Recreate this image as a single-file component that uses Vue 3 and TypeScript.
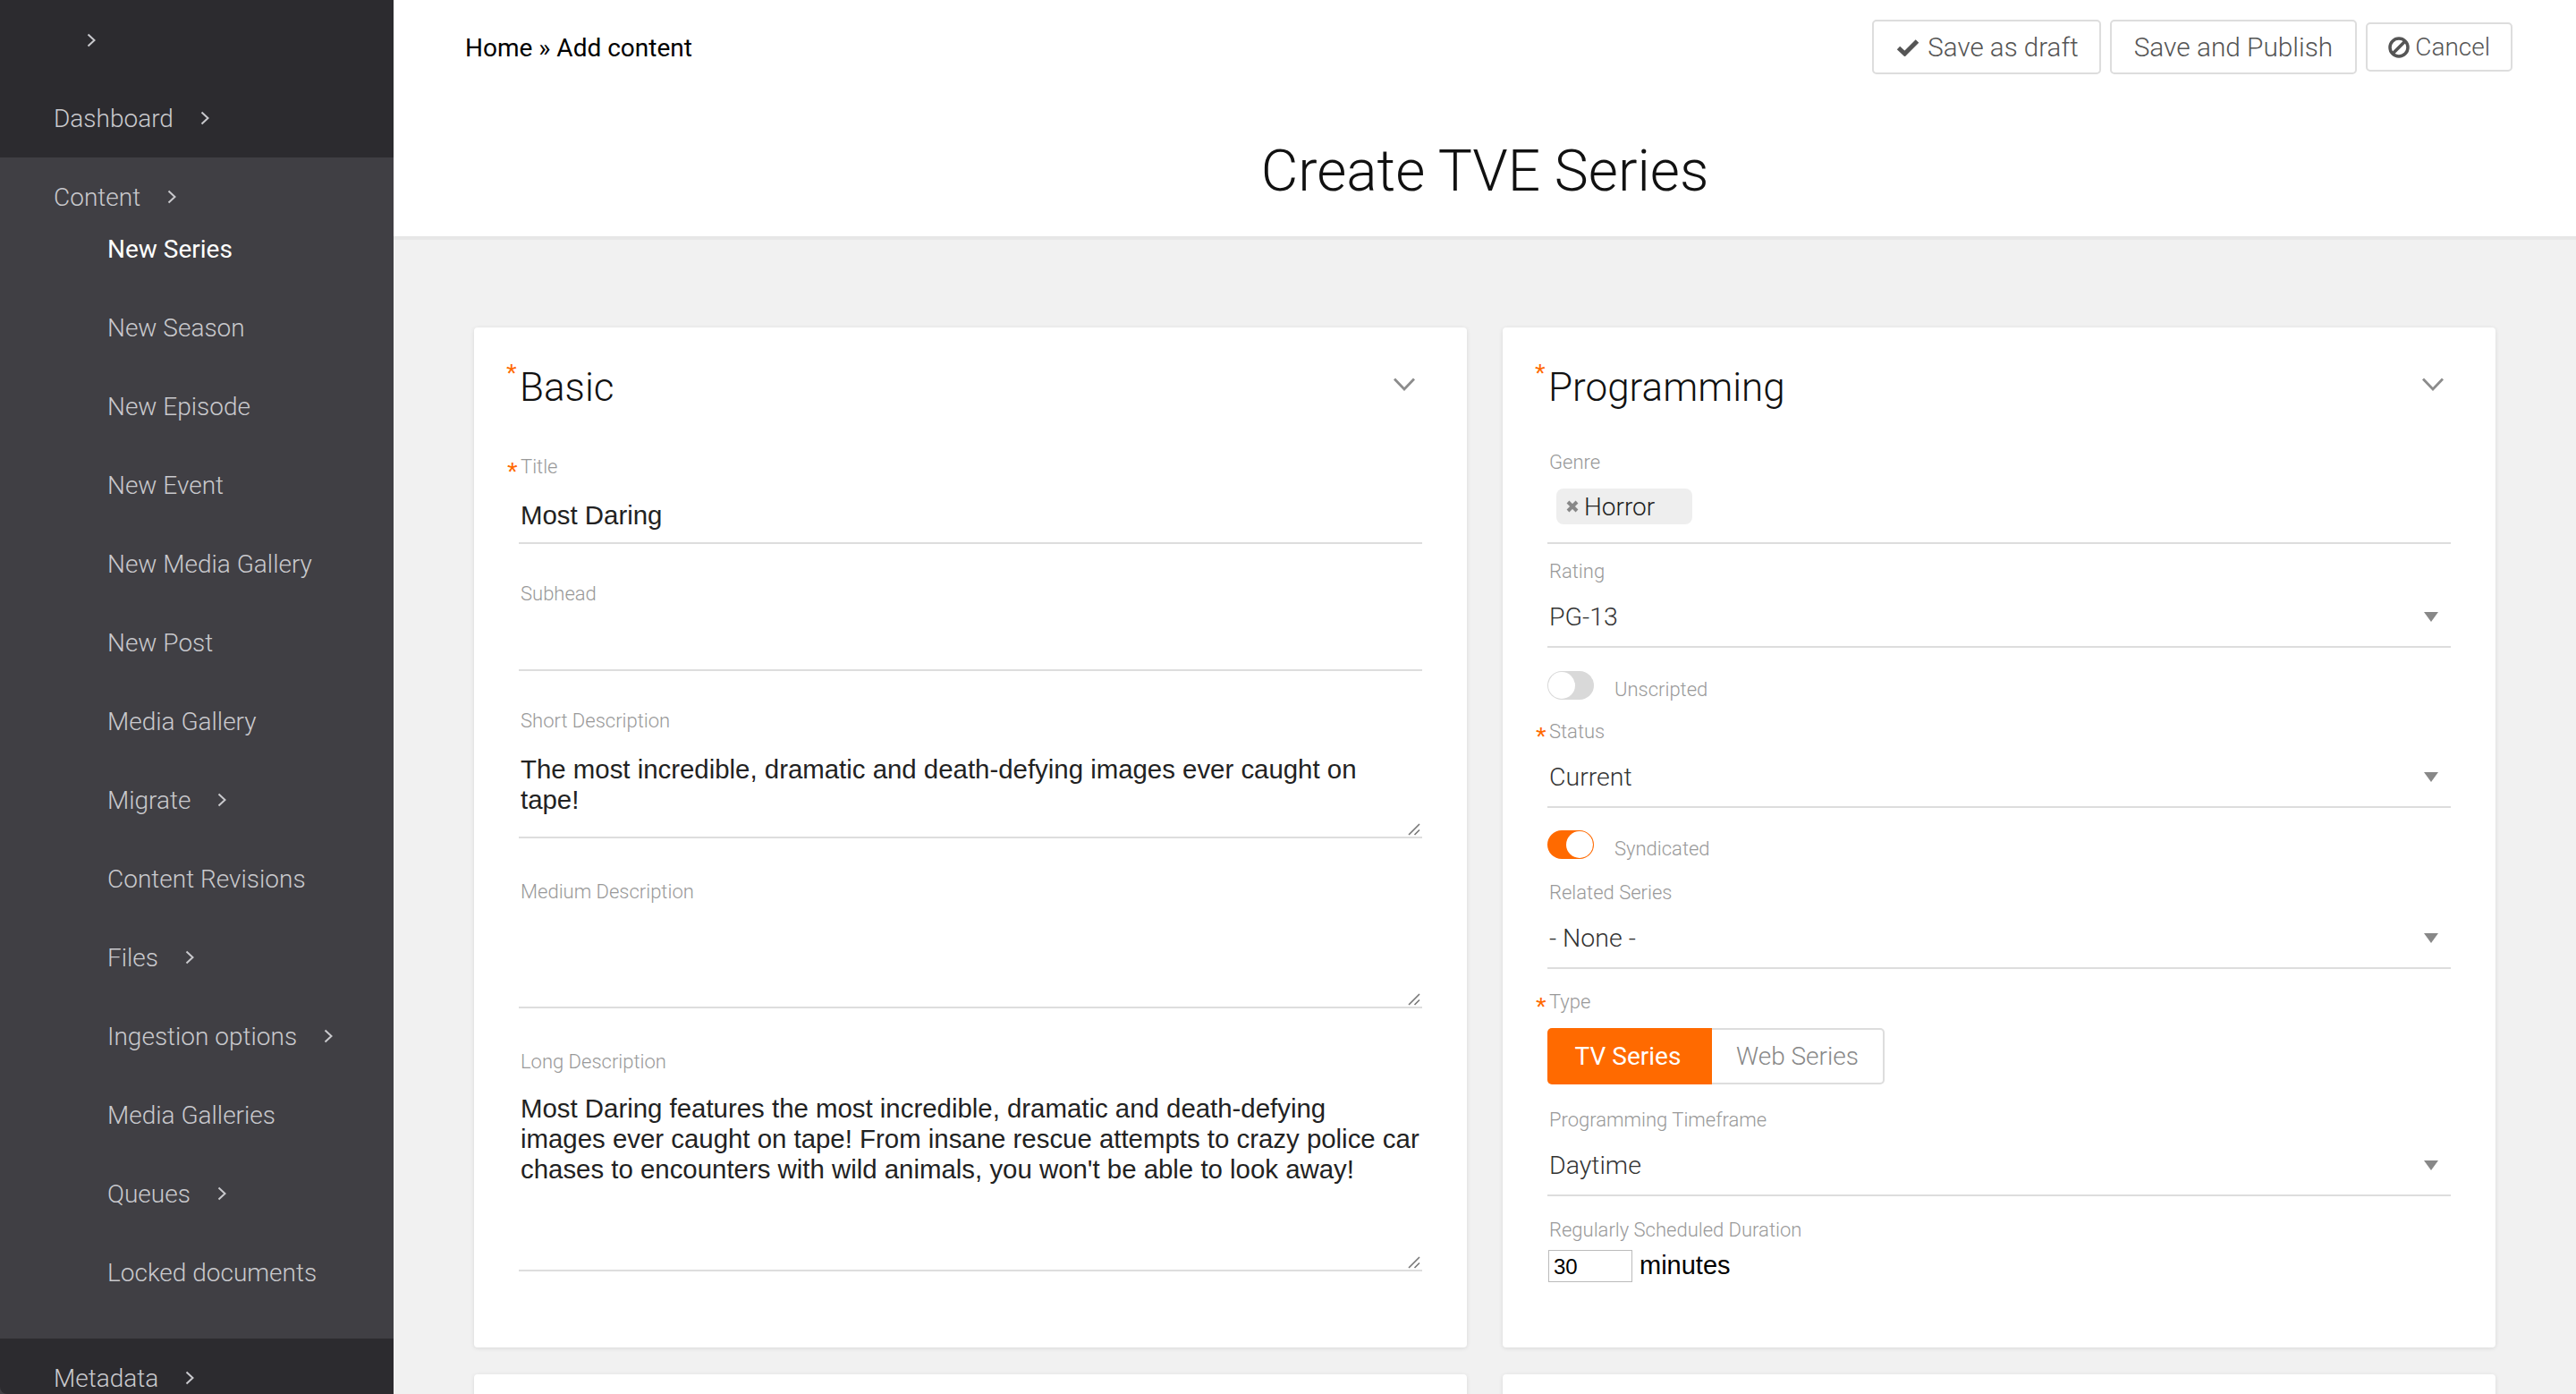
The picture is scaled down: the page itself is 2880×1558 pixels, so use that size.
<script setup lang="ts">
interface NavItem {
  label: string
  more?: boolean
  active?: boolean
}

const contentItems: NavItem[] = [
  { label: 'New Series', active: true },
  { label: 'New Season' },
  { label: 'New Episode' },
  { label: 'New Event' },
  { label: 'New Media Gallery' },
  { label: 'New Post' },
  { label: 'Media Gallery' },
  { label: 'Migrate', more: true },
  { label: 'Content Revisions' },
  { label: 'Files', more: true },
  { label: 'Ingestion options', more: true },
  { label: 'Media Galleries' },
  { label: 'Queues', more: true },
  { label: 'Locked documents' },
]

interface BasicField {
  label: string
  required?: boolean
  lines?: string[]
  kind: 'text' | 'short' | 'medium' | 'long'
}

const basicFields: BasicField[] = [
  { label: 'Title', required: true, kind: 'text', lines: ['Most Daring'] },
  { label: 'Subhead', kind: 'text' },
  {
    label: 'Short Description',
    kind: 'short',
    lines: ['The most incredible, dramatic and death-defying images ever caught on', 'tape!'],
  },
  { label: 'Medium Description', kind: 'medium' },
  {
    label: 'Long Description',
    kind: 'long',
    lines: [
      'Most Daring features the most incredible, dramatic and death-defying',
      'images ever caught on tape! From insane rescue attempts to crazy police car',
      "chases to encounters with wild animals, you won't be able to look away!",
    ],
  },
]
</script>

<template>
  <div class="app">
    <aside class="sidebar">
      <div class="nav-dark">
        <div class="nav-row top-row">
          <svg class="chev" viewBox="0 0 10 16"><path d="M1.5 1.5 8.5 8 1.5 14.5" /></svg>
        </div>
        <div class="nav-row">
          Dashboard
          <svg class="chev" viewBox="0 0 10 16"><path d="M1.5 1.5 8.5 8 1.5 14.5" /></svg>
        </div>
      </div>
      <div class="nav-light">
        <div class="nav-row">
          Content
          <svg class="chev" viewBox="0 0 10 16"><path d="M1.5 1.5 8.5 8 1.5 14.5" /></svg>
        </div>
        <ul class="sub-nav">
          <li v-for="item in contentItems" :key="item.label" class="nav-row sub" :class="{ active: item.active }">
            {{ item.label }}
            <svg v-if="item.more" class="chev" viewBox="0 0 10 16"><path d="M1.5 1.5 8.5 8 1.5 14.5" /></svg>
          </li>
        </ul>
      </div>
      <div class="nav-dark last">
        <div class="nav-row">
          Metadata
          <svg class="chev" viewBox="0 0 10 16"><path d="M1.5 1.5 8.5 8 1.5 14.5" /></svg>
        </div>
      </div>
    </aside>

    <main class="main">
      <header class="header">
        <div class="toolbar">
          <div class="crumbs">Home » Add content</div>
          <div class="actions">
            <button class="btn draft">
              <svg class="btn-icon check" viewBox="0 0 26 20"><path d="M2.5 10.5 9.5 17 23.5 3" /></svg>
              Save as draft
            </button>
            <button class="btn">Save and Publish</button>
            <button class="btn small">
              <svg class="btn-icon ban" viewBox="0 0 24 24"><circle cx="12" cy="12" r="10" /><path d="M5 19 19 5" /></svg>
              Cancel
            </button>
          </div>
        </div>
        <h1>Create TVE Series</h1>
      </header>

      <section class="cards">
        <div class="card">
          <div class="card-head">
            <h2><span class="star big">*</span>Basic</h2>
            <svg class="collapse" viewBox="0 0 24 15"><path d="M1 1.5 12 13 23 1.5" /></svg>
          </div>
          <div v-for="field in basicFields" :key="field.label" class="field" :class="'f-' + field.kind">
            <label class="label"><span v-if="field.required" class="star">*</span>{{ field.label }}</label>
            <div class="box">
              <div v-for="line in field.lines" :key="line" class="line">{{ line }}</div>
              <svg v-if="field.kind !== 'text'" class="grip" viewBox="0 0 14 14"><path d="M1 13 13 1M7.5 13 13 7.5" /></svg>
            </div>
          </div>
        </div>

        <div class="card right">
          <div class="card-head">
            <h2><span class="star big">*</span>Programming</h2>
            <svg class="collapse" viewBox="0 0 24 15"><path d="M1 1.5 12 13 23 1.5" /></svg>
          </div>

          <div class="field genre">
            <label class="label">Genre</label>
            <div class="box tag-box">
              <span class="tag">
                <svg class="tag-x" viewBox="0 0 14 14"><path d="M2 2 12 12M12 2 2 12" /></svg>
                Horror
              </span>
            </div>
          </div>

          <div class="field select-field">
            <label class="label">Rating</label>
            <div class="box select">
              PG-13
              <svg class="caret" viewBox="0 0 16 11"><path d="M0 0H16L8 11Z" /></svg>
            </div>
          </div>

          <div class="toggle-row">
            <span class="toggle"><i></i></span>
            <span class="toggle-label">Unscripted</span>
          </div>

          <div class="field select-field status">
            <label class="label"><span class="star">*</span>Status</label>
            <div class="box select">
              Current
              <svg class="caret" viewBox="0 0 16 11"><path d="M0 0H16L8 11Z" /></svg>
            </div>
          </div>

          <div class="toggle-row on-row">
            <span class="toggle on"><i></i></span>
            <span class="toggle-label">Syndicated</span>
          </div>

          <div class="field select-field related">
            <label class="label">Related Series</label>
            <div class="box select">
              - None -
              <svg class="caret" viewBox="0 0 16 11"><path d="M0 0H16L8 11Z" /></svg>
            </div>
          </div>

          <div class="field type">
            <label class="label"><span class="star">*</span>Type</label>
            <div class="segments">
              <span class="seg selected">TV Series</span>
              <span class="seg">Web Series</span>
            </div>
          </div>

          <div class="field select-field timeframe">
            <label class="label">Programming Timeframe</label>
            <div class="box select">
              Daytime
              <svg class="caret" viewBox="0 0 16 11"><path d="M0 0H16L8 11Z" /></svg>
            </div>
          </div>

          <div class="field duration">
            <label class="label">Regularly Scheduled Duration</label>
            <div class="duration-row">
              <span class="num">30</span>
              <span class="unit">minutes</span>
            </div>
          </div>
        </div>

        <div class="card stub"></div>
        <div class="card stub"></div>
      </section>
    </main>
  </div>
</template>

<style>
html,
body {
  margin: 0;
  height: 100%;
  overflow: hidden;
}
</style>

<style scoped>
.app {
  display: flex;
  width: 2880px;
  height: 1558px;
  overflow: hidden;
  background: #f1f1f1;
  font-family: Roboto, "Liberation Sans", sans-serif;
}

/* sidebar */
.sidebar {
  flex: 0 0 440px;
  height: 1558px;
  overflow: hidden;
  background: #403f44;
  color: #c9c9cd;
  font-size: 28px;
  font-weight: 300;
}
.nav-dark {
  background: #2c2b2f;
}
.nav-dark.last {
  height: 62px;
  overflow: hidden;
  border-bottom-left-radius: 8px;
}
.nav-light {
  padding-bottom: 30px;
}
.nav-row {
  display: flex;
  align-items: center;
  height: 88px;
  padding-left: 60px;
}
.top-row {
  padding-left: 97px;
  height: 88px;
  align-items: flex-start;
  padding-top: 37px;
  box-sizing: border-box;
}
.top-row .chev {
  margin-left: 0;
}
.chev {
  width: 10px;
  height: 16px;
  margin-left: 30px;
  fill: none;
  stroke: #c9c9cd;
  stroke-width: 2;
}
.sub-nav {
  list-style: none;
  margin: -30px 0 0;
  padding: 0;
}
.sub {
  padding-left: 120px;
}
.sub.active {
  color: #fff;
  font-weight: 400;
}

/* header */
.main {
  flex: 1;
  min-width: 0;
}
.header {
  height: 264px;
  background: #fff;
  border-bottom: 4px solid #e7e7e7;
}
.toolbar {
  display: flex;
  justify-content: space-between;
  align-items: center;
  padding: 22px 71px 0 80px;
  height: 61px;
}
.crumbs {
  padding-top: 2px;
  font-size: 28px;
  color: #000;
}
.actions {
  display: flex;
  align-items: center;
  gap: 10px;
}
.btn {
  display: flex;
  align-items: center;
  height: 61px;
  padding: 0 25px;
  background: #fff;
  border: 2px solid #ddd;
  border-radius: 5px;
  color: #555;
  font-family: inherit;
  font-size: 29.8px;
  font-weight: 300;
}
.btn.draft {
  padding-right: 23px;
  font-size: 29.5px;
}
.btn.small {
  height: 55px;
  padding: 0 23px;
  font-size: 28px;
}
.btn-icon {
  flex: none;
  margin-right: 9px;
  fill: none;
  stroke: #555;
}
.check {
  width: 26px;
  height: 20px;
  stroke-width: 5;
}
.ban {
  width: 24px;
  height: 24px;
  margin-right: 6px;
  stroke-width: 3.5;
}
h1 {
  margin: 69px 0 0;
  text-align: center;
  font-size: 64px;
  line-height: 80px;
  font-weight: 300;
  color: #111;
}

/* cards */
.cards {
  display: grid;
  grid-template-columns: 1110px 1110px;
  grid-auto-rows: 1140px;
  gap: 30px 40px;
  padding: 98px 90px 0;
}
.card {
  position: relative;
  box-sizing: border-box;
  padding: 37px 50px 0;
  background: #fff;
  border-radius: 4px;
  box-shadow: 0 1px 5px rgba(0, 0, 0, 0.1);
}
.card-head {
  display: flex;
  justify-content: space-between;
  align-items: center;
  height: 60px;
  padding-left: 1px;
}
h2 {
  margin: -2px 0 0;
  font-size: 44px;
  line-height: 60px;
  font-weight: 300;
  color: #111;
}
.collapse {
  width: 24px;
  height: 15px;
  margin: 0 8px 8px 0;
  fill: none;
  stroke: #8c8c8c;
  stroke-width: 2.8;
}
.star {
  display: inline-block;
  width: 15px;
  margin-left: -15px;
  color: #ff6a00;
  font-family: "Liberation Sans", sans-serif;
  font-size: 30px;
  font-weight: 400;
  line-height: 1;
  vertical-align: -8px;
}
.star.big {
  vertical-align: 21px;
}

/* form fields */
.field {
  margin-top: 41px;
}
.field:nth-child(2) {
  margin-top: 44px;
}
.f-medium,
.f-long {
  margin-top: 45px;
}
.label {
  display: block;
  height: 30px;
  padding-left: 2px;
  color: #999;
  font-size: 22px;
  font-weight: 300;
  line-height: 30px;
}
.right .label {
  line-height: 32px;
}
.box {
  position: relative;
  box-sizing: border-box;
  height: 71px;
  padding: 22px 2px 0;
  border-bottom: 2px solid #ddd;
  color: #222;
  font-family: "Liberation Sans", sans-serif;
  font-size: 29.4px;
}
.f-short .box {
  height: 116px;
}
.f-medium .box {
  height: 115px;
}
.f-long .box {
  height: 219px;
  padding-top: 20px;
}
.line {
  line-height: 34px;
  white-space: nowrap;
}
.grip {
  position: absolute;
  right: 2px;
  bottom: 1px;
  width: 14px;
  height: 14px;
  fill: none;
  stroke: #777;
  stroke-width: 1.6;
}

/* right card */
.right .genre {
  margin-top: 38px;
}
.tag-box {
  height: 77px;
  padding: 15px 0 0 10px;
}
.tag {
  display: flex;
  align-items: center;
  box-sizing: border-box;
  width: 152px;
  height: 40px;
  padding-left: 11px;
  background: #eee;
  border-radius: 8px;
  color: #222;
  font-family: Roboto, sans-serif;
  font-size: 28px;
  font-weight: 300;
}
.tag-x {
  width: 14px;
  height: 14px;
  margin-right: 6px;
  fill: none;
  stroke: #888;
  stroke-width: 4;
}
.select-field {
  margin-top: 15px;
}
.select {
  display: flex;
  justify-content: space-between;
  align-items: center;
  height: 71px;
  padding: 4px 2px 0;
  color: #333;
  font-family: Roboto, sans-serif;
  font-size: 28.5px;
  font-weight: 300;
}
.caret {
  width: 16px;
  height: 11px;
  margin-right: 12px;
  fill: #888;
}
.toggle-row {
  display: flex;
  align-items: center;
  gap: 23px;
  margin-top: 26px;
  height: 32px;
}
.on-row {
  margin-top: 25px;
}
.toggle {
  box-sizing: border-box;
  display: flex;
  width: 52px;
  height: 32px;
  padding: 1px;
  background: #d9d9d9;
  border-radius: 16px;
}
.toggle i {
  width: 30px;
  height: 30px;
  background: #fff;
  border-radius: 50%;
}
.toggle.on {
  justify-content: flex-end;
  background: #ff6a00;
}
.toggle-label {
  padding-top: 8px;
  color: #999;
  font-size: 22px;
  font-weight: 300;
}
.status {
  margin-top: 20px;
}
.related {
  margin-top: 22px;
}
.type {
  margin-top: 21px;
}
.segments {
  display: inline-flex;
  margin-top: 15px;
  height: 63px;
}
.seg {
  box-sizing: border-box;
  display: flex;
  align-items: center;
  padding: 0 27px;
  border: 2px solid #ddd;
  border-left: none;
  border-radius: 0 5px 5px 0;
  color: #888;
  font-size: 28px;
  font-weight: 300;
}
.seg.selected {
  width: 184px;
  padding: 0 4px 0 0;
  justify-content: center;
  background: #ff6a00;
  border: none;
  border-radius: 5px 0 0 5px;
  color: #fff;
  font-weight: 400;
}
.timeframe {
  margin-top: 24px;
}
.duration {
  margin-top: 22px;
}
.duration-row {
  display: flex;
  align-items: center;
  gap: 8px;
  margin-top: 8px;
  padding-left: 1px;
  font-family: "Liberation Sans", sans-serif;
}
.num {
  box-sizing: border-box;
  width: 94px;
  height: 36px;
  padding: 4px 5px;
  border: 1px solid #bbb;
  color: #000;
  font-size: 24px;
  line-height: 28px;
}
.unit {
  margin-top: -2px;
  color: #000;
  font-size: 29px;
}
</style>
